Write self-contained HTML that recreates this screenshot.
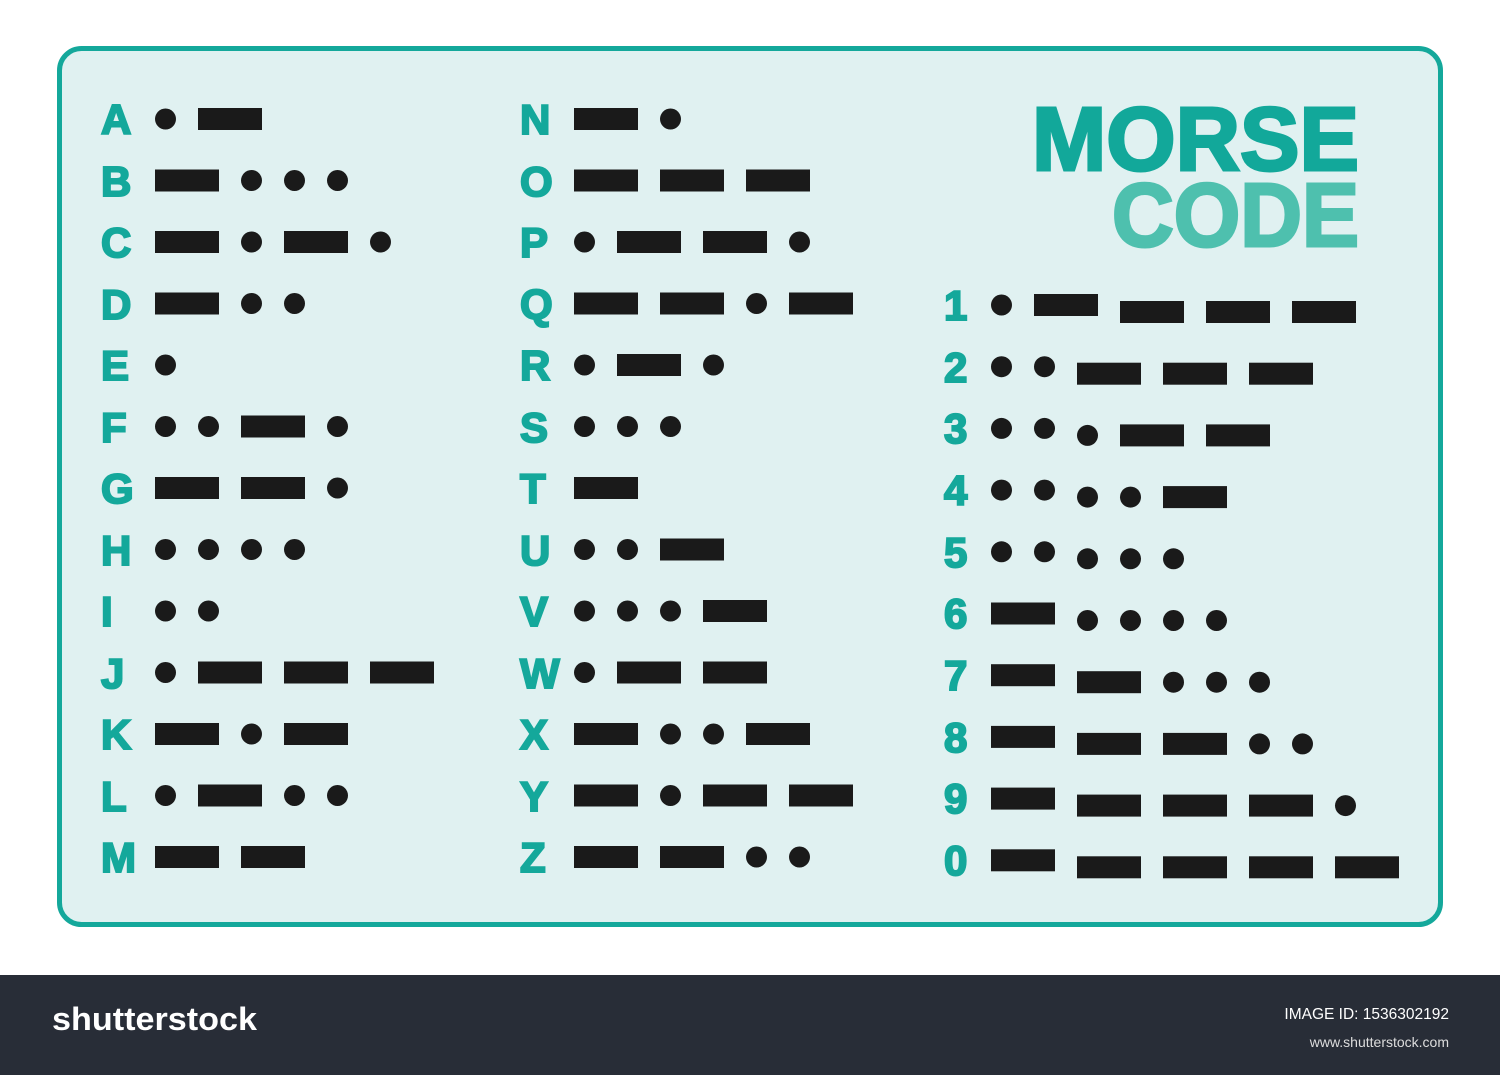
<!DOCTYPE html>
<html><head><meta charset="utf-8"><style>
html,body{margin:0;padding:0;background:#fff;width:1500px;height:1075px;overflow:hidden}
svg{display:block}
</style></head><body>
<svg id="s" width="1500" height="1075" viewBox="0 0 1500 1075" xmlns="http://www.w3.org/2000/svg">
<rect x="59.5" y="48.5" width="1381" height="876" rx="22" fill="#e0f1f1" stroke="#14a89b" stroke-width="5"/>
<g font-family="Liberation Sans, sans-serif" font-weight="bold" font-size="42" fill="#14a89b" stroke="#14a89b" stroke-width="2">
<text x="101" y="134">A</text><text x="101" y="196">B</text><text x="101" y="257">C</text><text x="101" y="319">D</text><text x="101" y="380">E</text><text x="101" y="442">F</text><text x="101" y="503">G</text><text x="101" y="565">H</text><text x="101" y="626">I</text><text x="101" y="688">J</text><text x="101" y="749">K</text><text x="101" y="811">L</text><text x="101" y="872">M</text>
<text x="520" y="134">N</text><text x="520" y="196">O</text><text x="520" y="257">P</text><text x="520" y="319">Q</text><text x="520" y="380">R</text><text x="520" y="442">S</text><text x="520" y="503">T</text><text x="520" y="565">U</text><text x="520" y="626">V</text><text x="520" y="688">W</text><text x="520" y="749">X</text><text x="520" y="811">Y</text><text x="520" y="872">Z</text>
<text x="944" y="320">1</text><text x="944" y="382">2</text><text x="944" y="443">3</text><text x="944" y="505">4</text><text x="944" y="567">5</text><text x="944" y="628">6</text><text x="944" y="690">7</text><text x="944" y="752">8</text><text x="944" y="813">9</text><text x="944" y="875">0</text>
</g>
<g font-family="Liberation Sans, sans-serif" font-weight="bold" text-anchor="end" stroke-width="3">
<text x="1359" y="170" font-size="90" fill="#12a89a" stroke="#12a89a" textLength="327" lengthAdjust="spacingAndGlyphs">MORSE</text>
<text x="1359" y="246" font-size="90" fill="#4ec0ae" stroke="#4ec0ae" textLength="247" lengthAdjust="spacingAndGlyphs">CODE</text>
</g>
<g id="m" fill="#1a1a1a"></g>
<rect x="0" y="975" width="1500" height="100" fill="#282d37"/>
<text x="52" y="1030" font-family="Liberation Sans, sans-serif" font-weight="bold" font-size="32" fill="#fff" textLength="205" lengthAdjust="spacingAndGlyphs">shutterstock</text>
<text x="1449" y="1019" text-anchor="end" font-family="Liberation Sans, sans-serif" font-size="15.5" fill="#fff">IMAGE ID: 1536302192</text>
<text x="1449" y="1047" text-anchor="end" font-family="Liberation Sans, sans-serif" font-size="14" fill="#ddd">www.shutterstock.com</text>
</svg>
<script>
var g=document.getElementById('m'),NS='http://www.w3.org/2000/svg';
function el(t,a){var e=document.createElementNS(NS,t);for(var k in a)e.setAttribute(k,a[k]);g.appendChild(e);}
function draw(code,x,y,num){
 for(var i=0;i<code.length;i++){
  var yy=y+((num&&x>=1070)?7:0);
  if(code[i]=='.'){el('circle',{cx:x+10.5,cy:yy,r:10.5});x+=43;}
  else{el('rect',{x:x,y:yy-11,width:64,height:22});x+=86;}
 }
}
var L=['.-','-...','-.-.','-..','.','..-.','--.','....','..','.---','-.-','.-..','--'];
var R=['-.','---','.--.','--.-','.-.','...','-','..-','...-','.--','-..-','-.--','--..'];
var N=['.----','..---','...--','....-','.....','-....','--...','---..','----.','-----'];
for(var i=0;i<13;i++){draw(L[i],155,119+i*61.5);draw(R[i],574,119+i*61.5);}
for(var i=0;i<10;i++){draw(N[i],991,305+i*61.7,true);}
</script>
</body></html>
